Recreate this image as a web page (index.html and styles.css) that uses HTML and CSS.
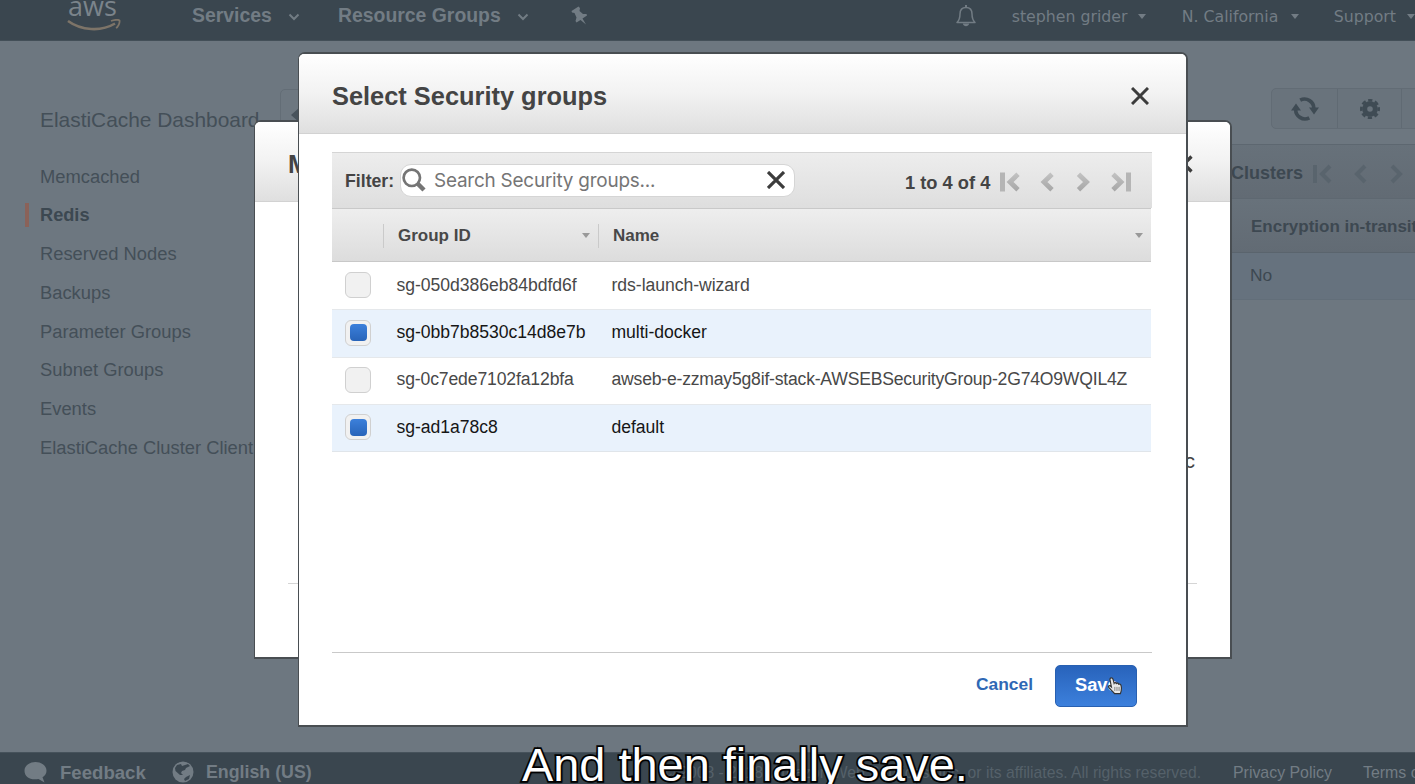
FILE: index.html
```html
<!DOCTYPE html>
<html lang="en">
<head>
<meta charset="utf-8">
<title>ElastiCache Dashboard</title>
<link rel="stylesheet" href="styles.css">
</head>
<body>
<div class="app">
  <header class="topbar">
    <div class="logo">
      <span class="logo-text">aws</span>
      <svg class="logo-smile" width="54" height="14" viewBox="0 0 54 14"><path d="M1 2C14 11.500 34 13 48 4.500" fill="none" stroke="#7d7468" stroke-width="2.6"/><path d="M44 2C48 0.500 52 0.500 52.500 1.500C53 4 51 8 49 9" fill="none" stroke="#7d7468" stroke-width="1.800"/></svg>
    </div>
    <nav class="nav-left">
      <span class="nav-item services">Services<svg width="12" height="8" viewBox="0 0 12 8"><path d="M1.500 1.500L6 6L10.500 1.500" fill="none" stroke="currentColor" stroke-width="2"/></svg></span>
      <span class="nav-item groups">Resource Groups<svg width="12" height="8" viewBox="0 0 12 8"><path d="M1.500 1.500L6 6L10.500 1.500" fill="none" stroke="currentColor" stroke-width="2"/></svg></span>
      <svg class="pin" width="17" height="19" viewBox="0 0 17 19"><path d="M0.500 5L7.500 0.500L9 2L8.500 5L12 8L15.500 8L16 9.500L11.500 12.500L15 18.500L9.500 14L5.500 16.500L4.500 15L5.500 11.500L3.500 7L1 6.500Z" fill="currentColor"/></svg>
    </nav>
    <nav class="nav-right">
      <svg class="bell" width="22" height="23" viewBox="0 0 22 23"><path d="M2 18.500C5 15.500 5 13 5 10C5 6 7 3.500 11 3.500C15 3.500 17 6 17 10C17 13 17 15.500 20 18.500Z" fill="none" stroke="currentColor" stroke-width="1.500" stroke-linejoin="round"/><path d="M10 1H12V4H10ZM7.800 19.500H14.200C13.500 23 8.500 23 7.800 19.500Z" fill="currentColor"/></svg>
      <span class="account user">stephen grider<i class="caret"></i></span>
      <span class="account region">N. California<i class="caret"></i></span>
      <span class="account support">Support<i class="caret"></i></span>
    </nav>
  </header>

  <div class="body">
    <aside class="sidebar">
      <div class="side-title">ElastiCache Dashboard</div>
      <ul class="side-list">
        <li>Memcached</li>
        <li class="active">Redis</li>
        <li>Reserved Nodes</li>
        <li>Backups</li>
        <li>Parameter Groups</li>
        <li>Subnet Groups</li>
        <li>Events</li>
        <li>ElastiCache Cluster Client</li>
      </ul>
    </aside>
    <div class="back-slot"><div class="back"><svg width="14" height="16" viewBox="0 0 14 16"><path d="M0 8L9 0V16Z" fill="#48535c"/></svg></div></div>
    <main class="content">
      <div class="tools">
        <span class="tool"><svg width="28" height="24" viewBox="0 0 28 24"><g fill="none" stroke="#3f4b54" stroke-width="3.600"><path d="M9.200 3.200A9.300 9.300 0 0 1 22.800 12"/><path d="M18.300 20.800A9.300 9.300 0 0 1 4.700 12"/></g><path d="M0 13.500L5 6.500L10 13.500ZM18 10.500H28L23 17.500Z" fill="#3f4b54"/></svg></span>
        <span class="tool"><svg width="22" height="22" viewBox="0 0 22 22"><circle cx="11" cy="11" r="5.300" fill="none" stroke="#3f4b54" stroke-width="5"/><circle cx="11" cy="11" r="8.700" fill="none" stroke="#3f4b54" stroke-width="2.600" stroke-dasharray="4.200 2.630" stroke-dashoffset="2.100"/></svg></span>
        <span class="tool"></span>
      </div>
      <div class="grid-bar"><b>Clusters</b>
        <svg width="104" height="20" viewBox="0 0 104 20"><g fill="none" stroke="#59646d" stroke-width="4"><path d="M2 1V19M17 2L9 10L17 18M52 2L44 10L52 18M79 2L87 10L79 18"/></g></svg>
      </div>
      <div class="grid-head">Encryption in-transit</div>
      <div class="grid-row">No</div>
    </main>
  </div>

  <footer class="footer">
    <span class="foot-item feedback"><svg width="23" height="22" viewBox="0 0 23 22"><path d="M11.500 1C17.500 1 22.500 4.500 22.500 9.700C22.500 12.500 21 14.800 18.500 16.300L20.500 21.500L14.500 18C6 19.500 0.500 15.500 0.500 9.700C0.500 4.500 5.500 1 11.500 1Z" fill="currentColor"/></svg>Feedback</span>
    <span class="foot-item lang"><svg width="22" height="22" viewBox="0 0 22 22"><circle cx="11" cy="11" r="10.500" fill="currentColor"/><path d="M5 4L9 3L10 5L13 4L16 3L18 5L14 7L13 9L10 10L9 12L11 14L8 14L3.500 10L3 7ZM14 16L18 14L17 18L13 20L12 18Z" fill="#3a464f"/></svg>English (US)</span>
    <span class="copyright">© 2008 - 2018, Amazon Web Services, Inc. or its affiliates. All rights reserved.</span>
    <span class="policy">Privacy Policy</span>
    <span class="terms">Terms of Use</span>
  </footer>

  <section class="modal modify">
    <div class="modal-head"><h2>M</h2><svg width="18" height="18" viewBox="0 0 18 18"><path d="M1.500 1.500L16.500 16.500M16.500 1.500L1.500 16.500" stroke="#3c3c3c" stroke-width="3.200"/></svg></div>
    <div class="modify-body"><span>c</span></div>
    <div class="modify-foot"></div>
  </section>

  <section class="modal select">
    <div class="modal-head"><h2>Select Security groups</h2><svg width="18" height="18" viewBox="0 0 18 18"><path d="M1 1L17 17M17 1L1 17" stroke="#3c3c3c" stroke-width="3"/></svg></div>
    <div class="select-body">
      <div class="filter-bar">
        <label>Filter:</label>
        <div class="search">
          <svg width="24" height="24" viewBox="0 0 24 24"><circle cx="9.800" cy="9.800" r="8.200" fill="none" stroke="#757575" stroke-width="2.700"/><path d="M15.500 15.500L22 22" stroke="#757575" stroke-width="4.500"/></svg>
          <span class="placeholder">Search Security groups...</span>
          <svg width="18" height="18" viewBox="0 0 18 18"><path d="M1 1L17 17M17 1L1 17" stroke="#3c3c3c" stroke-width="3.200"/></svg>
        </div>
        <span class="count">1 to 4 of 4</span>
        <svg class="pager" width="133" height="20" viewBox="0 0 133 20"><defs><linearGradient id="pg" gradientUnits="userSpaceOnUse" x1="0" y1="0" x2="0" y2="20"><stop offset="0" stop-color="#c4c4c4"/><stop offset="1" stop-color="#a5a5a5"/></linearGradient></defs><g fill="none" stroke="url(#pg)" stroke-width="4.800"><path d="M18 2.300L10 10L18 17.700M52 2.300L44 10L52 17.700M78.500 2.300L86.500 10L78.500 17.700M113 2.300L121 10L113 17.700"/></g><path d="M0 0.500H5V19.500H0ZM126 0.500H131V19.500H126Z" fill="#b5b5b5"/></svg>
      </div>
      <div class="table">
        <div class="tr th"><span class="c-check"></span><span class="c-id">Group ID<i class="caret"></i></span><span class="c-name">Name<i class="caret"></i></span></div>
        <div class="tr"><span class="c-check"><i class="box"></i></span><span class="c-id">sg-050d386eb84bdfd6f</span><span class="c-name">rds-launch-wizard</span></div>
        <div class="tr on"><span class="c-check"><i class="box"></i></span><span class="c-id">sg-0bb7b8530c14d8e7b</span><span class="c-name">multi-docker</span></div>
        <div class="tr"><span class="c-check"><i class="box"></i></span><span class="c-id tight">sg-0c7ede7102fa12bfa</span><span class="c-name long">awseb-e-zzmay5g8if-stack-AWSEBSecurityGroup-2G74O9WQIL4Z</span></div>
        <div class="tr on last"><span class="c-check"><i class="box"></i></span><span class="c-id">sg-ad1a78c8</span><span class="c-name">default</span></div>
      </div>
    </div>
    <div class="actions">
      <span class="cancel">Cancel</span>
      <span class="save">Save
        <svg class="cursor" width="16" height="18" viewBox="0 0 17 20"><path d="M4 1C5.500 0.500 6.300 2 6.600 3.500L7.500 7C8 6 9.500 6 10 7.200C11 6.400 12.200 6.800 12.500 8C13.800 7.500 15 8.300 15.300 9.800C15.800 12 16 14.500 14.500 18.500H8C6.500 16.500 3.500 14 1.500 11.500C0.500 10 2.300 9 3.700 10.300L4.500 11L3 3.500C2.700 2 3 1.300 4 1Z" fill="#e8e8e8" stroke="#333" stroke-width="1.300"/><path d="M8.300 11V15.500M10.700 11V15.500M13 11V15.500" stroke="#777" stroke-width="1"/></svg>
      </span>
    </div>
  </section>

  <div class="subtitle">And then finally save.</div>
</div>
</body>
</html>
```

FILE: styles.css
```css
* { box-sizing: border-box; }
body { margin: 0; background: #6d7780; font-family: "Liberation Sans", Arial, sans-serif; }
svg { display: block; flex: none; }
.app { position: relative; width: 1415px; height: 784px; overflow: hidden; display: flex; flex-direction: column; white-space: nowrap; }

/* top bar */
.topbar { height: 41px; flex: none; display: flex; background: #3a464f; color: #727c84; border-bottom: 1px solid #434f58; overflow: hidden; }
.logo { width: 54px; margin-left: 67px; margin-top: -10px; flex: none; }
.logo-text { display: block; height: 29px; padding-left: 1px; font: 500 27px/31px "Open Sans", sans-serif; color: #7b848b; }
.nav-left { display: flex; align-items: flex-start; width: 514px; margin-left: 71px; font-size: 19.4px; font-weight: bold; line-height: 31px; }
.nav-item { display: flex; align-items: center; }
.nav-item svg { margin-left: 16px; margin-top: 3px; }
.services { width: 146px; }
.groups { width: 233px; }
.pin { margin-top: 6px; }
.bell { margin-top: 4px; }
.nav-right { display: flex; margin-left: 250px; font: 15.75px/33px "DejaVu Sans", sans-serif; }
.account { display: flex; align-items: center; height: 33px; }
.caret { width: 0; height: 0; flex: none; border: 4.5px solid transparent; border-top: 5px solid currentColor; border-bottom: 0; }
.account .caret { margin-left: 11px; }
.user { width: 170px; margin-left: 35px; }
.region { width: 152px; }
.region .caret { margin-left: 13px; }

/* page */
.body { height: 711px; flex: none; display: flex; }
.sidebar { width: 280px; flex: none; color: #444f58; }
.side-title { margin: 66px 0 0 40px; font-size: 20.9px; line-height: 26px; }
.side-list { list-style: none; margin: 24.5px 0 0; padding: 0; font-size: 18.35px; }
.side-list li { height: 38.8px; line-height: 38.8px; padding-left: 40px; }
.side-list .active { font-size: 18.2px; font-weight: bold; color: #3c4851; background: linear-gradient(#8a6259, #8a6259) 25px 7px / 4px 24px no-repeat; }
.back-slot { width: 951px; flex: none; padding-top: 48px; }
.back { width: 60px; height: 41px; border: 1px solid #636d76; border-radius: 5px; padding: 17px 0 0 10px; }
.content { width: 184px; flex: none; overflow: hidden; color: #3d4851; }
.tools { display: flex; margin: 47px 0 0 40px; height: 41px; width: 194px; border: 1px solid #626c75; border-radius: 5px; background: #69737c; }
.tool { width: 64px; flex: none; display: flex; align-items: center; justify-content: center; border-right: 1px solid #606a73; }
.tool:first-child { width: 66px; }
.grid-bar { height: 54px; margin-top: 15px; display: flex; align-items: center; gap: 10px; font-size: 18px; padding-top: 4px; background: linear-gradient(#67717a, #626b74); border-top: 1px solid #5d6770; }
.grid-head { height: 55px; line-height: 55px; padding-left: 20px; font-size: 17px; font-weight: bold; background: linear-gradient(#68727b, #626b74); border-top: 1px solid #5e6871; border-bottom: 1px solid #5a646d; }
.grid-row { height: 47px; line-height: 45px; padding-left: 19px; font-size: 17.4px; background: #66727e; border-bottom: 1px solid #626e79; }

/* footer */
.footer { height: 32px; flex: none; display: flex; background: #3a464f; color: #727c84; border-top: 1px solid #46525b; line-height: 39px; overflow: hidden; }
.foot-item { display: flex; height: 38px; align-items: center; font-weight: bold; }
.feedback { width: 148px; padding-left: 24px; font-size: 18.6px; gap: 13px; }
.lang { width: 468px; padding-left: 24px; font-size: 17.8px; gap: 12px; }
.copyright { width: 585px; text-align: right; font-size: 15.7px; color: #55616a; }
.policy { width: 130px; margin-left: 32px; flex: none; font-size: 15.9px; }
.terms { font-size: 15.9px; }
.feedback, .lang, .copyright { flex: none; }

/* dialogs */
.modal { position: absolute; display: flex; flex-direction: column; background: #fff; border: 2px solid #494e52; border-left-width: 1px; border-radius: 7px 7px 0 0; }
.modal-head { height: 80px; flex: none; display: flex; align-items: center; justify-content: space-between; padding: 5px 37px 0 33px; background: linear-gradient(#fff, #f2f2f2 50%, #dfdfdf); border-bottom: 1px solid #d2d2d2; border-radius: 5px 5px 0 0; }
.modal h2 { margin: 0; font-size: 25.4px; line-height: 30px; color: #444; }
.modify { left: 254px; top: 120px; width: 978px; height: 539px; }
.modify-body { height: 381px; padding: 244px 35px 0; text-align: right; font-size: 21px; line-height: 30px; color: #444; }
.modify-foot { margin: 0 33px; border-top: 1px solid #d5d5d5; }
.select { left: 298px; top: 52px; width: 890px; height: 675px; }
.select-body { height: 519px; margin: 0 34px 0 33px; padding-top: 18px; border-bottom: 1px solid #c9c9c9; }
.filter-bar { display: flex; align-items: center; height: 56px; padding-left: 13px; background: linear-gradient(#ededed, #dedede); border-top: 1px solid #d5d5d5; color: #444; }
.filter-bar label { width: 55px; font-size: 17.7px; font-weight: bold; padding-top: 1px; }
.search { width: 395px; height: 33px; margin-top: -1px; display: flex; align-items: center; background: #fff; border: 1px solid #d5d5d5; border-radius: 11px; padding: 0 9px 0 1px; }
.placeholder { flex: 1; margin-left: 8px; font: 18.9px/31px Inter, sans-serif; letter-spacing: -0.2px; color: #757575; }
.count { margin-left: 110px; width: 95px; padding-top: 4px; font-size: 18.3px; font-weight: bold; }
.pager { margin-top: 3px; }
.table { width: 819px; }
.tr { display: grid; grid-template-columns: 51px 215px 553px; height: 47.3px; align-items: center; font-size: 17.6px; color: #484848; border-top: 1px solid #e5e8eb; }
.tr span { display: flex; align-items: center; }
.tr:not(.th) span { margin-top: -1.5px; }
.c-check { padding-left: 13px; }
.c-id { padding-left: 13.5px; letter-spacing: -0.04px; }
.c-name { padding-left: 13.5px; letter-spacing: -0.04px; }
.tight { letter-spacing: -0.14px; }
.long { letter-spacing: -0.21px; }
.th { height: 54px; font-size: 17px; font-weight: bold; background: linear-gradient(#eee, #dcdcdc); border-top-color: #c9c9c9; box-shadow: inset 0 -1px #c8c8c8; }
.th .c-id, .th .c-name { height: 24px; justify-content: space-between; border-left: 1px solid #cacaca; padding-left: 14px; padding-right: 8px; letter-spacing: 0; }
.th .caret { color: #999; }
.th + .tr { border-top-color: transparent; }
.on { background: #e9f2fc; color: #161616; }
.last { border-bottom: 1px solid #e0e5ea; height: 48px; }
.box { width: 26px; height: 26px; border: 1px solid #d0d0d0; border-radius: 6px; background: #f1f1f1; display: flex; align-items: center; justify-content: center; }
.on .box::after { content: ""; width: 17px; height: 17px; border-radius: 4px; background: linear-gradient(#3c80db, #2864b9); }
.actions { display: flex; justify-content: flex-end; padding: 12px 49px 0 0; font-weight: bold; }
.cancel { font-size: 17.4px; line-height: 38px; margin-right: 22px; color: #2f68b5; }
.save { position: relative; width: 82px; height: 42px; padding-left: 19px; font-size: 18.3px; line-height: 38px; color: #fff; background: linear-gradient(#2863bb, #3c80dc); border: 1px solid #2860b1; border-radius: 5px; }
.cursor { position: absolute; left: 51px; top: 11px; }

.subtitle { position: absolute; left: 522px; top: 738px; font-size: 46.9px; line-height: 54px; color: #fff; -webkit-text-stroke: 3.5px #000; paint-order: stroke fill; text-shadow: 1px 1px 2px #000; }
```
